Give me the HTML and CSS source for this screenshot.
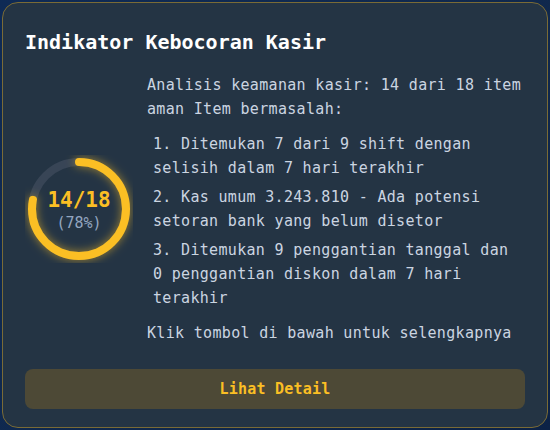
FILE: index.html
```html
<!DOCTYPE html>
<html lang="id">
<head>
<meta charset="utf-8">
<title>Indikator Kebocoran Kasir</title>
<link rel="stylesheet" href="styles.css">
</head>
<body>
<section class="card">
  <h2 class="title">Indikator Kebocoran Kasir</h2>
  <div class="content">
    <div class="gauge">
      <svg class="ring" width="108" height="108" viewBox="0 0 108 108">
        <circle class="track" cx="54" cy="54" r="47"></circle>
        <circle class="progress" cx="54" cy="54" r="47" stroke-dasharray="230.3 295.3" transform="rotate(-90 54 54)"></circle>
      </svg>
      <div class="gauge-text">
        <div class="score">14/18</div>
        <div class="pct">(78%)</div>
      </div>
    </div>
    <div class="details">
      <p class="intro">Analisis keamanan kasir: 14 dari 18 item aman Item bermasalah:</p>
      <div class="items">
        <p class="item">1. Ditemukan 7 dari 9 shift dengan selisih dalam 7 hari terakhir</p>
        <p class="item">2. Kas umum 3.243.810 - Ada potensi setoran bank yang belum disetor</p>
        <p class="item">3. Ditemukan 9 penggantian tanggal dan 0 penggantian diskon dalam 7 hari terakhir</p>
      </div>
      <p class="note">Klik tombol di bawah untuk selengkapnya</p>
    </div>
  </div>
  <button class="btn" type="button">Lihat Detail</button>
</section>
</body>
</html>
```
FILE: styles.css
```css
html, body {
  height: 100%;
}
body {
  margin: 0;
  padding: 2px;
  box-sizing: border-box;
  background: linear-gradient(135deg, #0e2a55 0%, #10284c 60%, #0c2246 100%);
  font-family: "DejaVu Sans Mono", "Liberation Mono", monospace;
}
.card {
  box-sizing: border-box;
  width: 546px;
  height: 426px;
  background: #243444;
  border: 1px solid #7a6b36;
  border-radius: 16px;
  padding: 24px 22px 17px 22px;
  display: flex;
  flex-direction: column;
}
.title {
  margin: 0;
  font-size: 20px;
  line-height: 30px;
  font-weight: bold;
  color: #ffffff;
}
.content {
  margin-top: 16px;
  display: flex;
  align-items: center;
  gap: 14px;
}
.gauge {
  display: grid;
  place-items: center;
  width: 108px;
  height: 108px;
  flex: none;
}
.ring, .gauge-text {
  grid-area: 1 / 1;
}
.track {
  fill: none;
  stroke: #384556;
  stroke-width: 8;
}
.progress {
  fill: none;
  stroke: #fbbf24;
  stroke-width: 8;
  stroke-linecap: round;
  filter: drop-shadow(0 0 5px rgba(251, 191, 36, 0.6));
}
.gauge-text {
  text-align: center;
  margin-top: 4px;
}
.score {
  font-size: 21px;
  line-height: 24px;
  font-weight: bold;
  color: #fbbf24;
}
.pct {
  font-size: 15px;
  line-height: 22px;
  color: #93a6c0;
}
.details {
  flex: 1;
  display: flex;
  flex-direction: column;
  gap: 11px;
  color: #cbd5e1;
  font-size: 15px;
  line-height: 24px;
  letter-spacing: 0.32px;
}
.details p {
  margin: 0;
}
.items {
  display: flex;
  flex-direction: column;
  gap: 5px;
}
.item {
  padding-left: 6px;
}
.btn {
  margin-top: 24px;
  height: 40px;
  border: none;
  border-radius: 8px;
  background: #4d4936;
  color: #fbbf24;
  font-family: "DejaVu Sans Mono", "Liberation Mono", monospace;
  font-size: 15px;
  font-weight: bold;
  letter-spacing: 0.2px;
  cursor: pointer;
}
```
